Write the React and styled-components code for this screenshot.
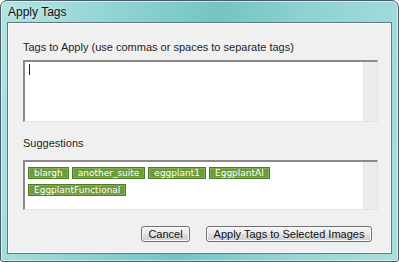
import { createGlobalStyle, styled } from "styled-components";

const GlobalStyle = createGlobalStyle`
  html, body {
    margin: 0;
    padding: 0;
    background: #ffffff;
  }
  * {
    box-sizing: border-box;
  }
`;

const Window = styled.div`
  width: 399px;
  height: 262px;
  border: 1px solid #4b5d66;
  border-radius: 7px 7px 3px 3px;
  background: linear-gradient(
    100deg,
    #b3e3e3 0%,
    #92d4d4 25%,
    #74c4c4 50%,
    #8fd2d2 70%,
    #a9dfdf 100%
  );
  box-shadow: inset 0 0 0 1px rgba(255, 255, 255, 0.55);
  padding: 0 6px 7px 6px;
  display: flex;
  flex-direction: column;
  font-family: "Liberation Sans", Arial, sans-serif;
`;

const TitleBar = styled.div`
  height: 21px;
  display: flex;
  align-items: center;
  padding-left: 1px;
  font-size: 12px;
  color: #111;
  text-shadow: 0 0 6px rgba(255, 255, 255, 0.9);
`;

const Client = styled.div`
  flex: 1;
  background: #f0f0f0;
  border: 1px solid #5f7b80;
  box-shadow: inset 0 0 0 1px #ffffff;
  padding: 17px 15px 0 15px;
  display: flex;
  flex-direction: column;
`;

const Label = styled.div`
  font-size: 11px;
  color: #1e1e1e;
  height: 14px;
  line-height: 14px;
  margin-bottom: ${(p) => p.$gap}px;
  margin-top: ${(p) => p.$top || 0}px;
`;

const Field = styled.div`
  width: 355px;
  height: ${(p) => p.$height}px;
  display: grid;
  grid-template-columns: 1fr 14px;
  border-top: 2px solid #8a8a8a;
  border-left: 2px solid #8a8a8a;
  border-right: 1px solid #e4e4e4;
  border-bottom: 1px solid #e4e4e4;
`;

const FieldBody = styled.div`
  background: #ffffff;
  padding: ${(p) => p.$pad};
  display: flex;
  flex-wrap: wrap;
  align-content: flex-start;
  gap: 5px 3px;
`;

const Gutter = styled.div`
  background: #ececec;
  border-left: 1px solid #e2e2e2;
`;

const Caret = styled.span`
  display: block;
  width: 1px;
  height: 11px;
  background: #222;
`;

const Tag = styled.span`
  height: 12px;
  padding: 0 5px;
  background: #6c9b3a;
  border: 1px solid #4f7a28;
  box-shadow: inset 0 0 0 1px #82ad52;
  color: #ffffff;
  font-family: "DejaVu Sans", Verdana, sans-serif;
  font-size: 9px;
  line-height: 10px;
  display: inline-flex;
  align-items: center;
`;

const ButtonRow = styled.div`
  display: flex;
  justify-content: flex-end;
  gap: 16px;
  margin-top: 16px;
  padding-right: 4px;
`;

const Button = styled.button`
  width: ${(p) => p.$width}px;
  height: 16px;
  padding: 0;
  border: 1px solid #707070;
  border-radius: 3px;
  background: linear-gradient(
    to bottom,
    #f4f4f4 0%,
    #ebebeb 48%,
    #dddddd 52%,
    #d0d0d0 100%
  );
  box-shadow: inset 0 0 0 1px #fbfbfb;
  font-family: "Liberation Sans", Arial, sans-serif;
  font-size: 11px;
  color: #111;
  line-height: 14px;
`;

const suggestions = [
  "blargh",
  "another_suite",
  "eggplant1",
  "EggplantAI",
  "EggplantFunctional",
];

export default function App() {
  return (
    <>
      <GlobalStyle />
      <Window>
        <TitleBar>Apply Tags</TitleBar>
        <Client>
          <Label $gap={6}>
            Tags to Apply (use commas or spaces to separate tags)
          </Label>
          <Field $height={62}>
            <FieldBody $pad="2px 4px">
              <Caret />
            </FieldBody>
            <Gutter />
          </Field>
          <Label $top={14} $gap={10}>
            Suggestions
          </Label>
          <Field $height={50}>
            <FieldBody $pad="5px 3px">
              {suggestions.map((s) => (
                <Tag key={s}>{s}</Tag>
              ))}
            </FieldBody>
            <Gutter />
          </Field>
          <ButtonRow>
            <Button $width={49}>Cancel</Button>
            <Button $width={166}>Apply Tags to Selected Images</Button>
          </ButtonRow>
        </Client>
      </Window>
    </>
  );
}
